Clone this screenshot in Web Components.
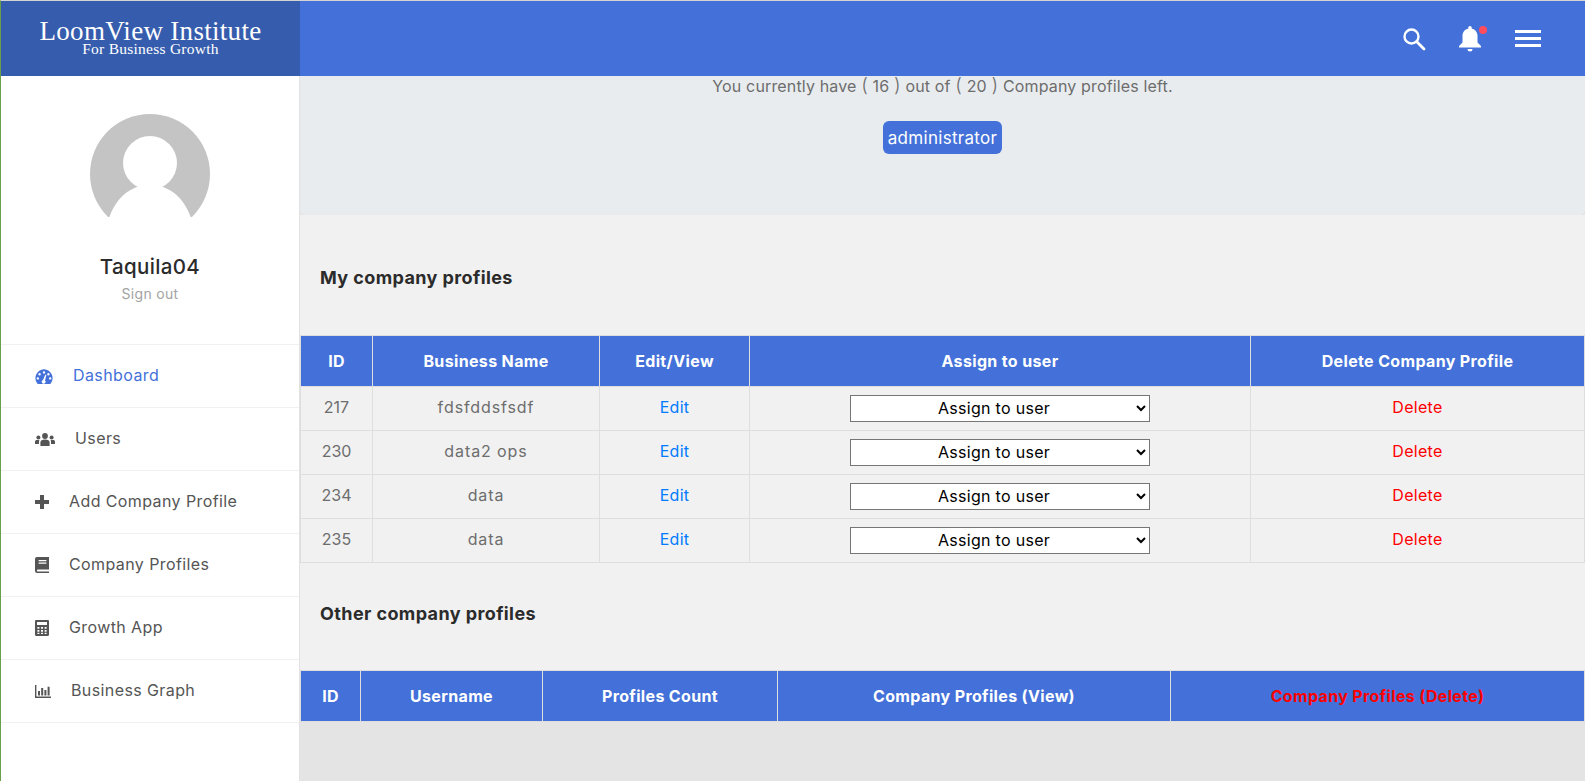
<!DOCTYPE html>
<html lang="en">
<head>
<meta charset="utf-8">
<title>LoomView Institute</title>
<style>
  html, body { margin: 0; height: 100%; overflow: hidden; }
  body { font-family: Inter, "Open Sans", sans-serif; }
</style>
</head>
<body>
<app-shell>
  <top-bar slot="top"></top-bar>
  <side-nav slot="side">
    <nav-item label="Dashboard" active>
      <svg width="18" height="15" viewBox="0 0 18 15"><path fill="currentColor" fill-rule="evenodd" d="M2.6 15A9 9 0 0 1 9 .2 9 9 0 0 1 15.4 15zM9 2.2a1.2 1.2 0 1 0 0 2.4 1.2 1.2 0 0 0 0-2.4zM4.6 4a1.2 1.2 0 1 0 0 2.4 1.2 1.2 0 0 0 0-2.4zM13.4 4a1.2 1.2 0 1 0 0 2.4 1.2 1.2 0 0 0 0-2.4zM2.8 8.2a1.2 1.2 0 1 0 0 2.4 1.2 1.2 0 0 0 0-2.4zM15.2 8.2a1.2 1.2 0 1 0 0 2.4 1.2 1.2 0 0 0 0-2.4zM10.4 5.6 8 11a1.9 1.9 0 1 0 2 .4l1.4-5.4z"/></svg>
    </nav-item>
    <nav-item label="Users">
      <svg width="20" height="13" viewBox="0 0 20 13"><g fill="currentColor"><circle cx="10" cy="3" r="2.9"/><circle cx="3.4" cy="4.4" r="2"/><circle cx="16.6" cy="4.4" r="2"/><path d="M5.4 13V9.4C5.4 7.4 7 6.4 10 6.4s4.6 1 4.6 3V13z"/><path d="M0 11V8.6c0-1 .8-1.6 2-1.6h2.4a4 4 0 0 0-.4 2V11zM20 11V8.6c0-1-.8-1.6-2-1.6h-2.4a4 4 0 0 1 .4 2V11z"/></g></svg>
    </nav-item>
    <nav-item label="Add Company Profile">
      <svg width="14" height="14" viewBox="0 0 14 14"><path fill="currentColor" d="M5 0h4v5h5v4H9v5H5V9H0V5h5z"/></svg>
    </nav-item>
    <nav-item label="Company Profiles">
      <svg width="14" height="16" viewBox="0 0 14 16"><path fill="currentColor" fill-rule="evenodd" d="M2 0h12v12.4H2.6a1.2 1.2 0 0 0 0 2.2H14V16H2.2A2.2 2.2 0 0 1 0 13.8V2a2 2 0 0 1 2-2zM3.6 3v1.2h7.8V3zM3.6 5.6v1.2h7.8V5.6z"/></svg>
    </nav-item>
    <nav-item label="Growth App">
      <svg width="14" height="16" viewBox="0 0 14 16"><path fill="currentColor" fill-rule="evenodd" d="M1.2 0h11.600C13.500 0 14 .5 14 1.200v13.600c0 .7-.5 1.200-1.200 1.200H1.200C.5 16 0 15.500 0 14.800V1.200C0 .5.500 0 1.200 0zM2 2v3h10V2zM2.400 7v1.800h2V7zM6 7v1.800h2V7zM9.600 7v1.800h2V7zM2.400 10v1.800h2V10zM6 10v1.800h2V10zM9.600 10v1.800h2V10zM2.400 12.800v1.200h2v-1.200zM6 12.800v1.200h2v-1.200zM9.600 12.800v1.200h2v-1.200z"/></svg>
    </nav-item>
    <nav-item label="Business Graph">
      <svg width="16" height="13" viewBox="0 0 16 13"><path fill="currentColor" d="M0 0h1.400v11.600H16V13H0zM3 6h2v4.600H3zM6.200 3h2v7.600h-2zM9.400 5h2v5.600h-2zM12.600 1.800h2v8.800h-2z"/></svg>
    </nav-item>
  </side-nav>
  <quota-panel slot="main" left="16" total="20" role-name="administrator"></quota-panel>
  <section-title slot="main" style="--before:51px;--after:45px">My company profiles</section-title>
  <data-table slot="main" style="--cols:72px 227px 150px 501px 335px">
    <table-row head><table-cell>ID</table-cell><table-cell>Business Name</table-cell><table-cell>Edit/View</table-cell><table-cell>Assign to user</table-cell><table-cell>Delete Company Profile</table-cell></table-row>
    <profile-row pid="217" name="fdsfddsfsdf"></profile-row>
    <profile-row pid="230" name="data2 ops"></profile-row>
    <profile-row pid="234" name="data"></profile-row>
    <profile-row pid="235" name="data"></profile-row>
  </data-table>
  <section-title slot="main" style="--before:39px;--after:44px">Other company profiles</section-title>
  <data-table slot="main" style="--cols:60px 182px 235px 393px 415px">
    <table-row head><table-cell>ID</table-cell><table-cell>Username</table-cell><table-cell>Profiles Count</table-cell><table-cell>Company Profiles (View)</table-cell><table-cell style="color:#f00">Company Profiles (Delete)</table-cell></table-row>
  </data-table>
</app-shell>

<script>
const fontStack = 'Inter, "Open Sans", sans-serif';

class AppShell extends HTMLElement {
  constructor() {
    super();
    this.attachShadow({ mode: 'open' }).innerHTML = `
      <style>
        :host {
          display: grid;
          grid-template-columns: 299px 1fr;
          grid-template-rows: 75px 1fr;
          height: 780px;
          border-top: 1px solid #d4d4d4;
          border-left: 1px solid #6a9f4a;
          background: #e4e4e4;
          overflow: hidden;
        }
        .top { grid-column: 1 / 3; }
        .main { min-width: 0; display: flex; flex-flow: column; }
      </style>
      <div class="top"><slot name="top"></slot></div>
      <slot name="side"></slot>
      <div class="main"><slot name="main"></slot></div>
    `;
  }
}

class TopBar extends HTMLElement {
  constructor() {
    super();
    this.attachShadow({ mode: 'open' }).innerHTML = `
      <style>
        :host {
          display: flex;
          align-items: stretch;
          height: 75px;
          background: #4371d9;
          color: #fff;
        }
        .logo {
          width: 299px;
          background: #365dad;
          display: flex;
          flex-flow: column;
          align-items: center;
          justify-content: center;
          font-family: "Liberation Serif", serif;
          padding-bottom: 3px;
          box-sizing: border-box;
        }
        .logo b { font-weight: 400; font-size: 27px; line-height: 24px; letter-spacing: .3px; }
        .logo small { font-size: 15.500px; line-height: 12px; letter-spacing: .25px; }
        .tools {
          margin-left: auto;
          display: flex;
          align-items: center;
          gap: 33px;
          padding-right: 44px;
        }
        .bell { position: relative; display: flex; margin-right: 1px; }
        .bell i {
          position: absolute;
          top: 0;
          right: -6px;
          width: 8px;
          height: 8px;
          border-radius: 50%;
          background: #ff4d5e;
        }
        svg { display: block; }
      </style>
      <div class="logo"><b>LoomView Institute</b><small>For Business Growth</small></div>
      <div class="tools">
        <svg width="24" height="24" viewBox="0 0 24 24" style="margin-top:1px"><circle cx="9.500" cy="9.500" r="7" fill="none" stroke="#fff" stroke-width="2.400"/><path d="M14.800 14.800 22 22" stroke="#fff" stroke-width="2.800" stroke-linecap="round"/></svg>
        <span class="bell">
          <svg width="22" height="26" viewBox="0 0 22 26"><path fill="#fff" d="M11 0c1 0 1.700.8 1.700 1.700v.9C16.300 3.500 18.500 6.500 18.500 10v6.500L22 20v1.500H0V20l3.500-3.500V10c0-3.500 2.200-6.500 5.800-7.400v-.9C9.300.8 10 0 11 0zM8.500 23h5a2.500 2.500 0 0 1-5 0z"/></svg>
          <i></i>
        </span>
        <svg width="26" height="17" viewBox="0 0 26 17"><path fill="#fff" d="M0 0h26v3H0zM0 7h26v3H0zM0 14h26v3H0z"/></svg>
      </div>
    `;
  }
}

class SideNav extends HTMLElement {
  constructor() {
    super();
    this.attachShadow({ mode: 'open' }).innerHTML = `
      <style>
        :host {
          display: block;
          background: #fff;
          border-right: 1px solid #e2e2e2;
          box-sizing: border-box;
          font-family: ${fontStack};
        }
        .profile {
          display: flex;
          flex-flow: column;
          align-items: center;
          padding: 38px 0 0;
          height: 269px;
          box-sizing: border-box;
          border-bottom: 1px solid #f1f1f1;
        }
        svg { display: block; }
        .name { margin-top: 19px; font-size: 20.500px; line-height: 28px; letter-spacing: .35px; color: #2b2b2b; font-weight: 500; }
        .out { margin-top: 3px; font-size: 14px; line-height: 20px; letter-spacing: .3px; color: #a3a3a3; }
      </style>
      <div class="profile">
        <svg width="120" height="120" viewBox="0 0 120 120">
          <circle cx="60" cy="60" r="60" fill="#c4c4c4"/>
          <rect x="0" y="103" width="120" height="17" fill="#fff"/>
          <circle cx="60" cy="49" r="27" fill="#fff"/>
          <path fill="#fff" d="M19 104C26 84 40 71 60 71s34 13 41 33z"/>
        </svg>
        <div class="name">Taquila04</div>
        <div class="out">Sign out</div>
      </div>
      <slot></slot>
    `;
  }
}

class NavItem extends HTMLElement {
  constructor() {
    super();
    this.attachShadow({ mode: 'open' }).innerHTML = `
      <style>
        :host {
          display: flex;
          align-items: center;
          gap: 20px;
          height: 63px;
          box-sizing: border-box;
          padding-left: 34px;
          border-bottom: 1px solid #f1f1f1;
          color: #555;
          font-size: 16px;
          letter-spacing: .4px;
        }
        :host([active]) { color: #4371d9; }
        ::slotted(svg) { display: block; flex: none; }
        #label { margin-bottom: 2px; }
      </style>
      <slot></slot>
      <span id="label"></span>
    `;
  }

  connectedCallback() {
    this.shadowRoot.getElementById('label').textContent = this.getAttribute('label');
  }
}

class QuotaPanel extends HTMLElement {
  constructor() {
    super();
    this.attachShadow({ mode: 'open' }).innerHTML = `
      <style>
        :host {
          display: flex;
          flex-flow: column;
          align-items: center;
          height: 139px;
          background: #e9ecef;
          border-radius: 0 0 6px 6px;
          font-family: ${fontStack};
          color: #6d6d6d;
          font-size: 16px;
          letter-spacing: .15px;
        }
        p { margin: 0; line-height: 20px; }
        .paren { font-size: 19px; font-weight: 300; line-height: 20px; }
        .role {
          margin-top: 25px;
          height: 33px;
          width: 119px;
          display: flex;
          align-items: center;
          justify-content: center;
          background: #4371d9;
          color: #fff;
          border-radius: 6px;
          font-size: 17px;
          letter-spacing: .3px;
        }
      </style>
      <p id="line"></p>
      <div class="role" id="role"></div>
    `;
  }

  connectedCallback() {
    const root = this.shadowRoot;
    const paren = (v) => `<span class="paren">(</span> ${v} <span class="paren">)</span>`;
    root.getElementById('line').innerHTML = `You currently have ${paren(this.getAttribute('left'))} out of ${paren(this.getAttribute('total'))} Company profiles left.`;
    root.getElementById('role').textContent = this.getAttribute('role-name');
  }
}

class SectionTitle extends HTMLElement {
  constructor() {
    super();
    this.attachShadow({ mode: 'open' }).innerHTML = `
      <style>
        :host {
          display: block;
          background: #f1f1f1;
          padding: var(--before) 20px var(--after);
          font-family: ${fontStack};
          font-weight: 700;
          font-size: 18px;
          letter-spacing: .4px;
          line-height: 24px;
          color: #2b2b2b;
        }
      </style>
      <slot></slot>
    `;
  }
}

class DataTable extends HTMLElement {
  constructor() {
    super();
    this.attachShadow({ mode: 'open' }).innerHTML = `
      <style>
        :host { display: block; font-family: ${fontStack}; background: #f1f1f1; }
      </style>
      <slot></slot>
    `;
  }
}

class TableRow extends HTMLElement {
  constructor() {
    super();
    this.attachShadow({ mode: 'open' }).innerHTML = `
      <style>
        :host {
          display: grid;
          grid-template-columns: var(--cols);
          height: 44px;
          box-sizing: border-box;
          border-bottom: 1px solid #dedede;
          color: #6d6d6d;
          font-size: 16px;
          letter-spacing: .3px;
        }
        :host([head]) {
          height: 52px;
          background: #4371d9;
          border-top: 1px solid #dedede;
          color: #fff;
          font-weight: 700;
          letter-spacing: .35px;
        }
      </style>
      <slot></slot>
    `;
  }
}

class TableCell extends HTMLElement {
  constructor() {
    super();
    this.attachShadow({ mode: 'open' }).innerHTML = `
      <style>
        :host {
          display: flex;
          align-items: center;
          justify-content: center;
          min-width: 0;
          box-sizing: border-box;
          border-left: 1px solid #dedede;
        }
        :host(:last-child) { border-right: 1px solid #dedede; }
      </style>
      <slot></slot>
    `;
  }
}

class ProfileRow extends HTMLElement {
  constructor() {
    super();
    this.attachShadow({ mode: 'open' }).innerHTML = `
      <style>
        :host { display: block; }
        a { text-decoration: none; }
        .edit { color: #007bff; }
        .del { color: #f00; }
        #pid { letter-spacing: 0; padding-bottom: 3px; }
        #name { letter-spacing: .9px; padding-bottom: 3px; }
        a { margin-bottom: 3px; }
        select {
          width: 300px;
          height: 27px;
          padding-bottom: 2px;
          font-family: ${fontStack};
          font-size: 16px;
          letter-spacing: .3px;
          color: #000;
          background: #fff;
          text-align: center;
          text-align-last: center;
        }
      </style>
      <table-row>
        <table-cell id="pid"></table-cell>
        <table-cell id="name"></table-cell>
        <table-cell><a class="edit" href="#">Edit</a></table-cell>
        <table-cell><select><option>Assign to user</option></select></table-cell>
        <table-cell><a class="del" href="#">Delete</a></table-cell>
      </table-row>
    `;
  }

  connectedCallback() {
    this.shadowRoot.getElementById('pid').textContent = this.getAttribute('pid');
    this.shadowRoot.getElementById('name').textContent = this.getAttribute('name');
  }
}

customElements.define('app-shell', AppShell);
customElements.define('top-bar', TopBar);
customElements.define('side-nav', SideNav);
customElements.define('nav-item', NavItem);
customElements.define('quota-panel', QuotaPanel);
customElements.define('section-title', SectionTitle);
customElements.define('data-table', DataTable);
customElements.define('table-row', TableRow);
customElements.define('table-cell', TableCell);
customElements.define('profile-row', ProfileRow);
</script>
</body>
</html>
